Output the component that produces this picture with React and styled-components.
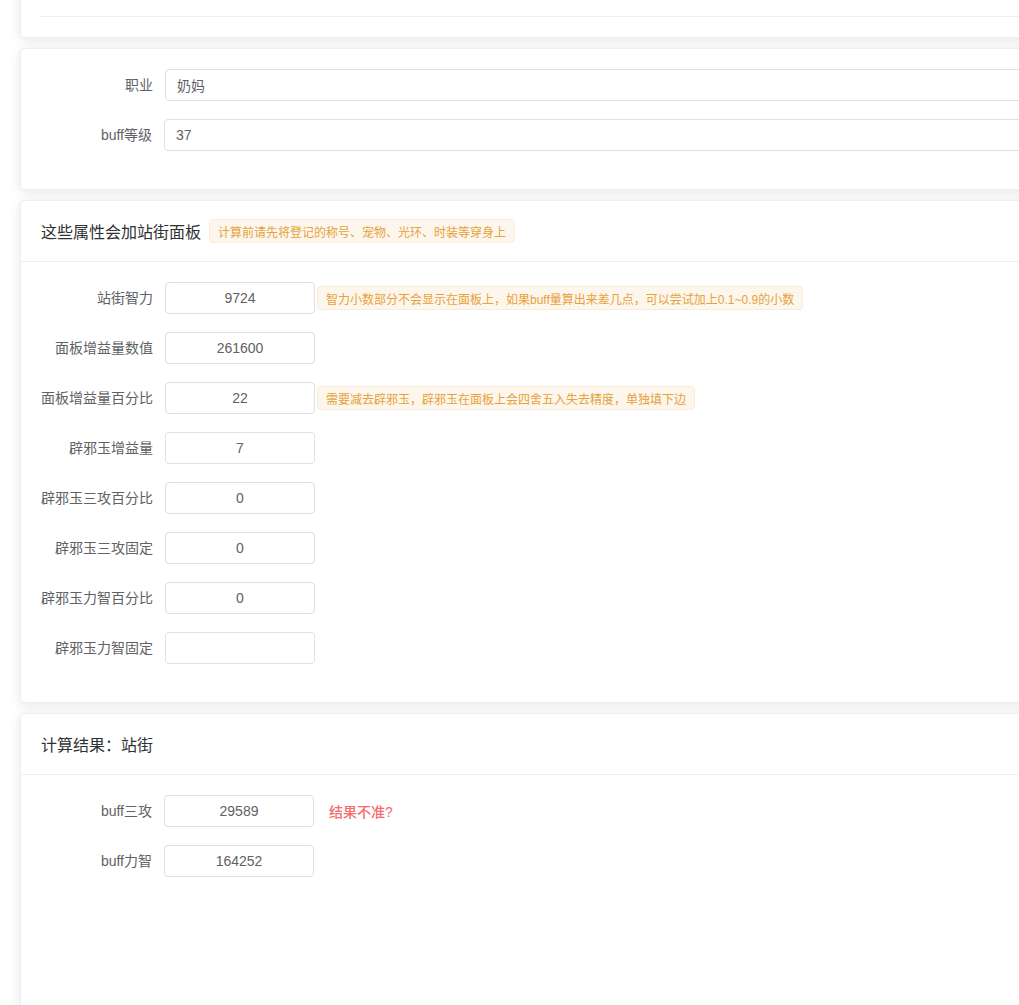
import React from "react";
import styled, { createGlobalStyle } from "styled-components";

const Global = createGlobalStyle`
  html, body {
    margin: 0;
    padding: 0;
    background: #fff;
    overflow: hidden;
    font-family: "Liberation Sans", "Noto Sans CJK SC", sans-serif;
  }
  * { box-sizing: border-box; }
`;

const Page = styled.div`
  padding: 0 0 0 20px;
  width: 1140px;
`;

const Card = styled.div`
  background: #fff;
  border: 1px solid #ebeef5;
  border-radius: 4px;
  box-shadow: 0 2px 12px 0 rgba(0, 0, 0, 0.1);
  margin-bottom: 10px;
  margin-top: ${(p) => p.$offset || 0}px;
  min-height: ${(p) => p.$minHeight || 0}px;
  color: #303133;
  overflow: hidden;
`;

const CardHeader = styled.div`
  padding: 18px 20px;
  border-bottom: 1px solid #ebeef5;
  display: flex;
  align-items: center;
  gap: 8px;
  height: 61px;
`;

const CardTitle = styled.span`
  font-size: 16px;
  color: #303133;
  font-family: "Noto Sans CJK SC", sans-serif;
  line-height: 24px;
`;

const CardBody = styled.div`
  padding: 20px;
`;

const TabLine = styled.div`
  height: 36px;
  border-bottom: 1px solid #ebeef5;
`;

const FormItem = styled.div`
  display: flex;
  align-items: center;
  margin-bottom: 18px;
  height: 32px;
`;

const Label = styled.label`
  width: ${(p) => p.$width || 124}px;
  flex: none;
  text-align: right;
  padding-right: 12px;
  font-size: 14px;
  color: #606266;
  line-height: 32px;
  font-family: "Liberation Sans", "Noto Sans CJK SC", sans-serif;
`;

const Input = styled.input`
  height: 32px;
  width: ${(p) => (p.$full ? "auto" : "150px")};
  flex: ${(p) => (p.$full ? "1" : "none")};
  border: 1px solid #dcdfe6;
  border-radius: 4px;
  padding: ${(p) => (p.$center ? "0 15px" : "0 11px")};
  text-align: ${(p) => (p.$center ? "center" : "left")};
  font-size: 14px;
  color: #606266;
  background: #fff;
  outline: none;
  font-family: "Liberation Sans", "Noto Sans CJK SC", sans-serif;
`;

const Tag = styled.span`
  display: inline-flex;
  align-items: center;
  height: 24px;
  padding: 0 8px;
  margin-left: ${(p) => p.$ml || 0}px;
  font-size: 12px;
  color: #e6a23c;
  background: #fdf6ec;
  border: 1px solid #faecd8;
  border-radius: 4px;
  white-space: nowrap;
  font-family: "Liberation Sans", "Noto Sans CJK SC", sans-serif;
`;

const TextButton = styled.button`
  background: none;
  border: none;
  padding: 0;
  margin-left: 15px;
  color: #f56c6c;
  font-size: 14px;
  font-weight: 500;
  cursor: pointer;
  font-family: "Liberation Sans", "Noto Sans CJK SC", sans-serif;
`;

const panelFields = [
  { label: "站街智力", value: "9724", tip: "智力小数部分不会显示在面板上，如果buff量算出来差几点，可以尝试加上0.1~0.9的小数" },
  { label: "面板增益量数值", value: "261600" },
  { label: "面板增益量百分比", value: "22", tip: "需要减去辟邪玉，辟邪玉在面板上会四舍五入失去精度，单独填下边" },
  { label: "辟邪玉增益量", value: "7" },
  { label: "辟邪玉三攻百分比", value: "0" },
  { label: "辟邪玉三攻固定", value: "0" },
  { label: "辟邪玉力智百分比", value: "0" },
  { label: "辟邪玉力智固定", value: "" },
];

export default function App() {
  return (
    <>
      <Global />
      <Page>
        <Card $offset={-40}>
          <CardBody>
            <TabLine />
          </CardBody>
        </Card>

        <Card>
          <CardBody>
            <FormItem>
              <Label>职业</Label>
              <Input $full defaultValue="奶妈" />
            </FormItem>
            <FormItem>
              <Label $width={123}>buff等级</Label>
              <Input $full defaultValue="37" />
            </FormItem>
          </CardBody>
        </Card>

        <Card>
          <CardHeader>
            <CardTitle>这些属性会加站街面板</CardTitle>
            <Tag>计算前请先将登记的称号、宠物、光环、时装等穿身上</Tag>
          </CardHeader>
          <CardBody>
            {panelFields.map((f) => (
              <FormItem key={f.label}>
                <Label>{f.label}</Label>
                <Input $center defaultValue={f.value} />
                {f.tip && <Tag $ml={2}>{f.tip}</Tag>}
              </FormItem>
            ))}
          </CardBody>
        </Card>

        <Card $minHeight={340}>
          <CardHeader>
            <CardTitle>计算结果：站街</CardTitle>
          </CardHeader>
          <CardBody>
            <FormItem>
              <Label $width={123}>buff三攻</Label>
              <Input $center defaultValue="29589" />
              <TextButton>结果不准?</TextButton>
            </FormItem>
            <FormItem>
              <Label $width={123}>buff力智</Label>
              <Input $center defaultValue="164252" />
            </FormItem>
          </CardBody>
        </Card>
      </Page>
    </>
  );
}
